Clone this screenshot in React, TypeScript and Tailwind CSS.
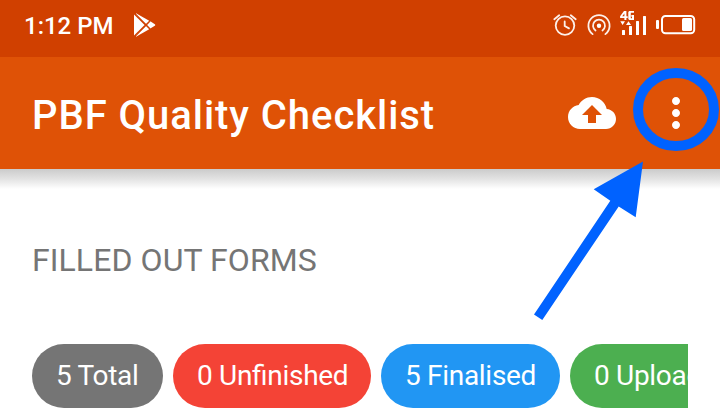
const chips = [
  { label: "5 Total", style: "w-[131px] bg-[#757575]" },
  { label: "0 Unfinished", style: "w-[198px] bg-[#f44336]" },
  { label: "5 Finalised", style: "w-[179px] bg-[#2196f3]" },
  { label: "0 Uploaded", style: "w-[190px] bg-[#4caf50]" },
];

function PlayIcon() {
  return (
    <svg className="ml-5 mt-[13px]" width="22" height="24" viewBox="0 0 22 24" fill="white">
      <path d="M0 1.6 10.6 12 0 22.4Z" />
      <path d="M2 .2 15.2 7.7 11.9 11 2 1.4Z" />
      <path d="M2 22.6 11.9 13 15.2 16.2 2 23.8Z" />
      <path d="M16.3 8.3 20.8 11.2Q22 12 20.8 12.8L16.3 15.6 12.8 12Z" />
      <path d="M1.6 .8 16 15.6M1.6 23.2 16 8.4" stroke="#d04000" strokeWidth="0.9" />
    </svg>
  );
}

function StatusIcons() {
  return (
    <svg width="180" height="57" viewBox="540 0 180 57" fill="none" stroke="#fdf0ea">
      <g strokeWidth="1.8" strokeLinecap="round">
        <circle cx="565" cy="25.6" r="9.3" />
        <path d="M554.3 19.2 559.2 15.2M570.8 15.2 575.7 19.2" />
        <path d="M564.7 21.5V26L569 28.4" />
        <path d="M592.6 34.1A10.6 10.6 0 1 1 605.4 34.1" />
        <path d="M595.5 30.5A6 6 0 1 1 602.5 30.5" />
      </g>
      <circle cx="599" cy="25.7" r="2.2" fill="white" stroke="none" />
      <g fill="white" stroke="none">
        <path fillRule="evenodd" d="M624 11H626.4V16.3H627.7V18H626.4V20H624.4V18H620.1V16.2ZM624.4 13.6 622.2 16.3H624.4Z" />
        <path d="M629.3 11H634V12.8H630.8V18.2H632V16.7H631.3V15H634V20H629.3L628.3 19V12Z" />
        <path d="M620.3 21.3H625L622.6 25ZM626 25H631L628.5 21.3Z" />
        <rect x="622" y="30" width="3" height="5" rx=".5" />
        <rect x="629" y="26" width="3" height="9" rx=".5" />
        <rect x="636" y="21" width="3" height="14" rx=".5" />
        <rect x="643" y="16" width="3" height="19" rx=".5" />
        <rect x="656" y="20" width="3" height="9" rx="1" />
        <rect x="682" y="18" width="10" height="13" rx="1.5" />
      </g>
      <rect x="662" y="15.9" width="32.2" height="17.3" rx="3.5" stroke="white" strokeWidth="2" />
    </svg>
  );
}

function StatusBar() {
  return (
    <div className="flex h-[57px] bg-[#d04000] text-white">
      <span className="ml-6 mt-[10px] w-[90px] whitespace-nowrap text-2xl font-medium leading-8">1:12 PM</span>
      <PlayIcon />
      <div className="ml-auto"><StatusIcons /></div>
    </div>
  );
}

function Toolbar() {
  return (
    <header className="flex h-28 items-center bg-[#df5206] pl-8 text-white">
      <h1 className="whitespace-nowrap pt-[5px] text-[40px] font-medium leading-[48px] tracking-[0.95px]">PBF Quality Checklist</h1>
      <svg className="ml-auto mr-9" width="48" height="48" viewBox="0 0 24 24" fill="white">
        <path d="M19.35 10.04C18.67 6.59 15.64 4 12 4 9.11 4 6.6 5.64 5.35 8.04 2.34 8.36 0 10.91 0 14c0 3.31 2.69 6 6 6h13c2.76 0 5-2.24 5-5 0-2.64-2.05-4.78-4.65-4.96zM14 13v4h-4v-4H7l5-5 5 5h-3z" />
      </svg>
      <svg className="mr-5" width="48" height="48" viewBox="0 0 24 24" fill="white">
        <path d="M12 8c1.1 0 2-.9 2-2s-.9-2-2-2-2 .9-2 2 .9 2 2 2zm0 2c-1.1 0-2 .9-2 2s.9 2 2 2 2-.9 2-2-.9-2-2-2zm0 6c-1.1 0-2 .9-2 2s.9 2 2 2 2-.9 2-2-.9-2-2-2z" />
      </svg>
    </header>
  );
}

function Annotation() {
  return (
    <svg className="pointer-events-none absolute inset-0" width="720" height="420" viewBox="0 0 720 420">
      <ellipse cx="676" cy="109.5" rx="38" ry="36.5" fill="none" stroke="#0062ff" strokeWidth="10" />
      <path d="M643 161.5 635.7 217.3 618.7 206.4 542.3 320 534 314.5 610.3 200.8 593.7 189.3Z" fill="#0062ff" />
    </svg>
  );
}

export default function App() {
  return (
    <main className="relative h-[420px] w-[720px] overflow-hidden bg-white font-['Roboto',sans-serif]">
      <StatusBar />
      <Toolbar />
      <div className="h-5 bg-linear-to-b from-[#cbcbcb] via-[#e3e3e3] to-white" />
      <h2 className="ml-8 mt-[51px] whitespace-nowrap text-[32px] leading-10 tracking-[0.08px] text-[#757575]">FILLED OUT FORMS</h2>
      <div className="mx-8 mt-16 flex gap-[10px] overflow-hidden">
        {chips.map((chip) => (
          <div key={chip.label} className={`flex h-16 shrink-0 items-center whitespace-nowrap rounded-full pl-6 text-[28px] leading-8 tracking-[-0.3px] [font-feature-settings:'liga'] text-white ${chip.style}`}>
            {chip.label}
          </div>
        ))}
      </div>
      <Annotation />
    </main>
  );
}
